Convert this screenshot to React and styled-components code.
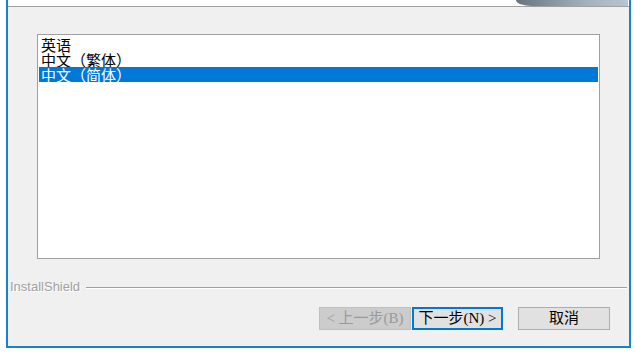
import React from "react";
import styled, { createGlobalStyle } from "styled-components";

const languages = ["英语", "中文（繁体）", "中文（简体）"];
const selected = 2;

export default function App() {
  return (
    <>
      <GlobalStyle />
      <Page>
        <Window>
          <Header>
            <Banner />
          </Header>
          <Body>
            <ListBox>
              {languages.map((name, i) => (
                <Item key={name} active={i === selected}>
                  {name}
                </Item>
              ))}
            </ListBox>
            <Brand>
              <BrandText>InstallShield</BrandText>
              <Rule />
            </Brand>
            <Buttons>
              <Button disabled>&lt; 上一步(B)</Button>
              <Button primary>下一步(N) &gt;</Button>
              <Button cancel>取消</Button>
            </Buttons>
          </Body>
        </Window>
      </Page>
    </>
  );
}

const GlobalStyle = createGlobalStyle`
  html, body {
    margin: 0;
    padding: 0;
    background: #fff;
  }
  body {
    font-family: "Liberation Serif", "Noto Sans CJK SC", serif;
  }
`;

const Page = styled.div`
  width: 635px;
  height: 363px;
  background: #fff;
  padding-left: 6px;
  box-sizing: border-box;
`;

const Window = styled.div`
  width: 625px;
  height: 348px;
  box-sizing: border-box;
  border: 2px solid #1a80d6;
  border-top: none;
  background: #f0f0f0;
  display: flex;
  flex-direction: column;
`;

const Header = styled.div`
  height: 6px;
  background: #fff;
  border-bottom: 1px solid #a0a0a0;
  display: flex;
  justify-content: flex-end;
`;

const Banner = styled.div`
  width: 112px;
  height: 6px;
  margin-right: 1px;
  border-bottom-left-radius: 16px 6px;
  background: linear-gradient(90deg, #66737f 0%, #8592a0 30%, #a6b3bf 65%, #b8c4ce 100%);
`;

const Body = styled.div`
  flex: 1;
  display: flex;
  flex-direction: column;
  padding-top: 27px;
`;

const ListBox = styled.div`
  margin-left: 29px;
  width: 563px;
  height: 225px;
  box-sizing: border-box;
  border: 1px solid #a0a0a0;
  background: #fff;
  padding: 2px 1px 0;
  display: flex;
  flex-direction: column;
`;

const Item = styled.div`
  height: 15px;
  line-height: 15px;
  padding-left: 2px;
  font-family: "Noto Sans CJK SC", sans-serif;
  font-size: 15px;
  white-space: nowrap;
  color: ${(p) => (p.active ? "#fff" : "#000")};
  background: ${(p) => (p.active ? "#0078d7" : "transparent")};
`;

const Brand = styled.div`
  display: flex;
  align-items: center;
  gap: 6px;
  margin-top: 21px;
  padding-left: 2px;
  padding-right: 2px;
`;

const BrandText = styled.span`
  font-family: "Liberation Sans", Arial, sans-serif;
  font-size: 13px;
  line-height: 14px;
  color: #a0a0a0;
  text-shadow: 1px 1px 0 #fff;
`;

const Rule = styled.div`
  flex: 1;
  height: 1px;
  background: #a0a0a0;
  box-shadow: 0 1px 0 #fff;
`;

const Buttons = styled.div`
  display: flex;
  margin-top: 13px;
  padding-left: 311px;
`;

const Button = styled.button`
  width: 92px;
  height: 23px;
  box-sizing: border-box;
  padding: 0;
  font-family: "Liberation Serif", "Noto Sans CJK SC", serif;
  font-size: 15px;
  line-height: 19px;
  white-space: nowrap;
  color: ${(p) => (p.disabled ? "#9a9a9a" : "#000")};
  background: ${(p) => (p.disabled ? "#cccccc" : "#e1e1e1")};
  border: ${(p) =>
    p.primary ? "2px solid #0078d7" : p.disabled ? "1px solid #bfbfbf" : "1px solid #adadad"};
  margin-left: ${(p) => (p.cancel ? "15px" : "0")};
  ${(p) => (p.primary ? "margin-left: 1px; width: 91px;" : "")}
`;
